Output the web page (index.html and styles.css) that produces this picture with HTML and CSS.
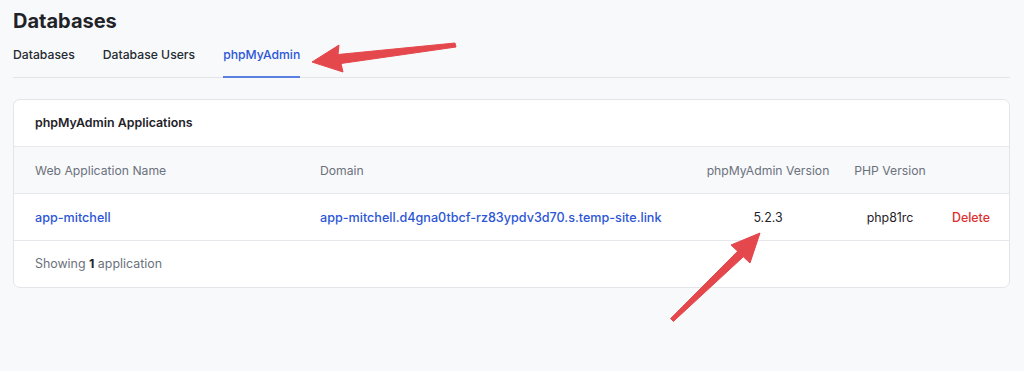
FILE: index.html
```html
<!DOCTYPE html>
<html lang="en">
<head>
  <meta charset="UTF-8" />
  <title>Databases</title>
  <link rel="stylesheet" href="styles.css">
</head>
<body>
  <div class="page">
    <h1 class="page-title">Databases</h1>

    <nav class="tabs">
      <a class="tab">Databases</a>
      <a class="tab">Database Users</a>
      <a class="tab active">phpMyAdmin</a>
    </nav>

    <div class="card">
      <div class="card-title">phpMyAdmin Applications</div>

      <div class="row head">
        <div>Web Application Name</div>
        <div>Domain</div>
        <div class="center">phpMyAdmin Version</div>
        <div class="center">PHP Version</div>
        <div></div>
      </div>

      <div class="row">
        <div><a class="link">app-mitchell</a></div>
        <div><a class="link">app-mitchell.d4gna0tbcf-rz83ypdv3d70.s.temp-site.link</a></div>
        <div class="center">5.2.3</div>
        <div class="center">php81rc</div>
        <div class="delete">Delete</div>
      </div>

      <div class="card-footer">Showing <b>1</b> application</div>
    </div>
  </div>

  <svg class="annotations" width="1024" height="371" viewBox="0 0 1024 371">
    <polygon points="312,62 339,45 338,54.5 455,43 456,47 341,63.5 343,72" />
    <polygon points="760,233 731,245 737.7,251.2 670.6,318.6 673.4,321.4 743.3,256.8 750,263" />
  </svg>
</body>
</html>
```

FILE: styles.css
```css
html, body {
  margin: 0;
  background: #f8f9fb;
  font-family: Inter, 'Noto Sans', sans-serif;
  color: #1f2328;
}

.page {
  padding: 9px 14px 0 13px;
}

.page-title {
  margin: 0;
  font-size: 20px;
  font-weight: 700;
  line-height: 24px;
  color: #1f2328;
}

.tabs {
  display: flex;
  gap: 28px;
  margin-top: 7px;
  border-bottom: 1px solid #e2e4e8;
}

.tab {
  font-size: 12.2px;
  font-weight: 500;
  color: #252a31;
  padding: 3px 0 9px;
  line-height: 24px;
  border-bottom: 2px solid transparent;
  margin-bottom: -1px;
}

.tab.active {
  color: #2c56d6;
  border-bottom-color: #5b7fe0;
}

.card {
  margin-top: 21px;
  background: #fff;
  border: 1px solid #e3e5e9;
  border-radius: 7px;
  overflow: hidden;
}

.card-title {
  height: 46px;
  line-height: 46px;
  padding-left: 21px;
  font-size: 12.4px;
  font-weight: 600;
  color: #1f2328;
  border-bottom: 1px solid #e6e8ec;
}

.row {
  display: grid;
  grid-template-columns: 285px 374px 148px 96px 1fr;
  align-items: center;
  height: 46px;
  padding-left: 21px;
  font-size: 12.4px;
  color: #1f2328;
  border-bottom: 1px solid #e6e8ec;
}

.row.head {
  background: #f8f9fb;
  color: #6b717c;
  font-size: 12.2px;
}

.center {
  text-align: center;
}

.link {
  color: #2c56d6;
  font-weight: 500;
  font-size: 12.6px;
}

.delete {
  color: #dc2f2f;
  font-weight: 500;
  padding-left: 14px;
}

.card-footer {
  height: 46px;
  line-height: 46px;
  padding-left: 21px;
  font-size: 12.4px;
  color: #6b717c;
}

.card-footer b {
  color: #1f2328;
  font-weight: 700;
}

.annotations {
  position: absolute;
  left: 0;
  top: 0;
  pointer-events: none;
}

.annotations polygon {
  fill: #e4474c;
  stroke: #e4474c;
  stroke-width: 1;
  stroke-linejoin: round;
}
```
